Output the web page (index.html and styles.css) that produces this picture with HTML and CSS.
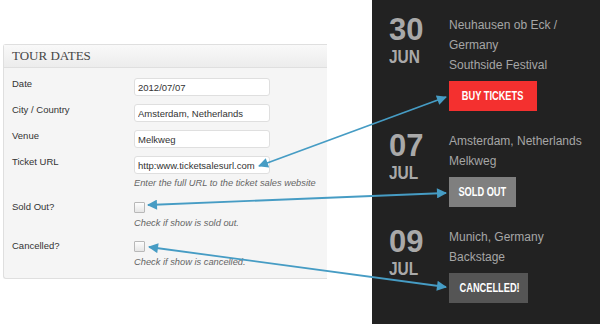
FILE: index.html
```html
<!DOCTYPE html>
<html lang="en">
  <head>
    <meta charset="UTF-8" />
    <meta name="viewport" content="width=device-width, initial-scale=1.0" />
    <title>Tour Dates</title>
    <link rel="stylesheet" href="styles.css">
  </head>
  <body>
    <div class="page">
      <div class="admin">
        <div class="postbox">
          <h3>Tour Dates</h3>
          <div class="fields">
            <div class="row">
              <label class="label" for="date">Date</label>
              <div class="field">
                <input type="text" id="date" class="form-control" value="2012/07/07" />
              </div>
            </div>
            <div class="row">
              <label class="label" for="city">City / Country</label>
              <div class="field">
                <input type="text" id="city" class="form-control" value="Amsterdam, Netherlands" />
              </div>
            </div>
            <div class="row">
              <label class="label" for="venue">Venue</label>
              <div class="field">
                <input type="text" id="venue" class="form-control" value="Melkweg" />
              </div>
            </div>
            <div class="row row-desc">
              <label class="label" for="url">Ticket URL</label>
              <div class="field">
                <input type="text" id="url" class="form-control" value="http:www.ticketsalesurl.com" />
                <p class="desc">Enter the full URL to the ticket sales website</p>
              </div>
            </div>
            <div class="row row-check">
              <label class="label" for="soldout">Sold Out?</label>
              <div class="field">
                <input type="checkbox" id="soldout" class="check" />
                <p class="desc">Check if show is sold out.</p>
              </div>
            </div>
            <div class="row row-check">
              <label class="label" for="cancelled">Cancelled?</label>
              <div class="field">
                <input type="checkbox" id="cancelled" class="check" />
                <p class="desc">Check if show is cancelled.</p>
              </div>
            </div>
          </div>
        </div>
      </div>

      <div class="tour">
        <div class="event">
          <div class="date">
            <span class="day">30</span>
            <span class="month">JUN</span>
          </div>
          <div class="info">
            <div>Neuhausen ob Eck /</div>
            <div>Germany</div>
            <div>Southside Festival</div>
            <a class="btn btn-buy" href="#"><span>BUY TICKETS</span></a>
          </div>
        </div>
        <div class="event">
          <div class="date">
            <span class="day">07</span>
            <span class="month">JUL</span>
          </div>
          <div class="info">
            <div>Amsterdam, Netherlands</div>
            <div>Melkweg</div>
            <span class="btn btn-soldout"><span>SOLD OUT</span></span>
          </div>
        </div>
        <div class="event">
          <div class="date">
            <span class="day">09</span>
            <span class="month">JUL</span>
          </div>
          <div class="info">
            <div>Munich, Germany</div>
            <div>Backstage</div>
            <span class="btn btn-cancelled"><span>CANCELLED!</span></span>
          </div>
        </div>
      </div>

      <!-- arrows linking the admin fields to the front end -->
      <svg class="arrows" width="600" height="324" viewBox="0 0 600 324">
        <defs>
          <marker id="head" viewBox="0 0 10 10" refX="9" refY="5"
                  markerWidth="13" markerHeight="10" markerUnits="userSpaceOnUse"
                  orient="auto-start-reverse">
            <path d="M0,0 L10,5 L0,10 z" fill="#469cc4" />
          </marker>
        </defs>
        <line x1="259" y1="166" x2="446" y2="97" />
        <line x1="148" y1="205" x2="446" y2="193" />
        <line x1="149" y1="247" x2="446" y2="287" />
      </svg>
    </div>
  </body>
</html>
```

FILE: styles.css
```css
body {
  margin: 0;
  background: #fff;
  font-family: "Liberation Sans", Arial, sans-serif;
}
.page {
  position: relative;
  display: flex;
  width: 600px;
  height: 324px;
  overflow: hidden;
}
.admin {
  width: 372px;
  flex: none;
}
.postbox {
  margin: 44px 0 0 3px;
  width: 323px;
  background: #f5f5f5;
  border: 1px solid #dfdfdf;
  border-right: none;
  border-radius: 3px 0 0 3px;
}
.postbox h3 {
  margin: 0;
  height: 22px;
  padding-left: 8px;
  line-height: 22px;
  font-family: "Liberation Serif", "Times New Roman", serif;
  font-size: 13px;
  font-weight: normal;
  text-transform: uppercase;
  color: #464646;
  background: linear-gradient(#f9f9f9, #ececec);
  border-bottom: 1px solid #dfdfdf;
}
.fields {
  padding: 10px 0 10px 8px;
}
.row {
  display: flex;
  margin-bottom: 8px;
}
.row-desc {
  margin-bottom: 13px;
}
.row-check {
  margin-bottom: 12px;
}
.row:last-child {
  margin-bottom: 0;
}
.label {
  width: 122px;
  flex: none;
  font-size: 9.5px;
  line-height: 12px;
  color: #333;
}
.row-check .label {
  margin-top: -1px;
}
.field {
  display: flex;
  flex-direction: column;
  align-items: flex-start;
}
.form-control {
  width: 136px;
  height: 18px;
  box-sizing: border-box;
  margin: 0;
  padding: 0 3px;
  font-family: "Liberation Sans", Arial, sans-serif;
  font-size: 9.5px;
  color: #333;
  background: #fff;
  border: 1px solid #dfdfdf;
  border-radius: 3px;
  outline: none;
}
.desc {
  margin: 3px 0 0;
  font-size: 9.3px;
  line-height: 12px;
  font-style: italic;
  color: #666;
}
.check {
  appearance: none;
  width: 11px;
  height: 11px;
  margin: 0;
  background: linear-gradient(#fdfdfd, #e6e6e6);
  border: 1px solid #b8b8b8;
  border-radius: 1px;
}
.row-check .desc {
  margin-top: 4px;
}

.tour {
  flex: 1;
  padding: 15px 0 0 17px;
  background: #222;
  color: #a6a6a6;
}
.event {
  display: flex;
  margin-bottom: 20px;
}
.date {
  width: 60px;
  flex: none;
  display: flex;
  flex-direction: column;
  align-items: flex-start;
  color: #a9a9a9;
  font-weight: bold;
}
.day {
  font-size: 31px;
  line-height: 30px;
}
.month {
  margin-top: 3px;
  font-size: 18px;
  line-height: 18px;
  transform: scaleX(0.86);
  transform-origin: left;
}
.info {
  font-size: 12px;
  line-height: 20px;
}
.btn {
  display: block;
  margin-top: 6px;
  height: 30px;
  line-height: 30px;
  text-align: center;
  font-size: 12.5px;
  font-weight: bold;
  color: #fff;
  text-decoration: none;
}
.btn span {
  display: inline-block;
  white-space: nowrap;
  transform: scaleX(0.74);
}
.btn-buy {
  width: 88px;
  background: #f4302f;
}
.btn-soldout {
  width: 67px;
  background: #7f7f7f;
}
.btn-cancelled {
  width: 79px;
  background: #555;
}

.arrows {
  position: absolute;
  top: 0;
  left: 0;
  pointer-events: none;
}
.arrows line {
  stroke: #469cc4;
  stroke-width: 1.8;
  marker-start: url(#head);
  marker-end: url(#head);
}
```
